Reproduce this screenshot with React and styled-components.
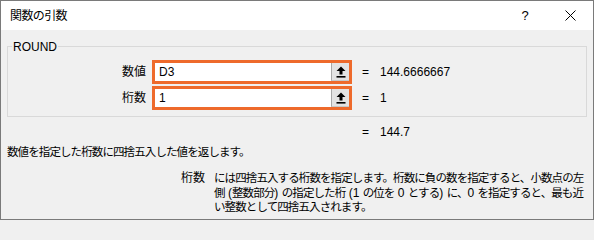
import React from "react";
import styled, { createGlobalStyle } from "styled-components";

const Global = createGlobalStyle`
  html, body { margin: 0; padding: 0; background: #f0f0f0; }
  * { box-sizing: border-box; }
`;

const FONT = `"Liberation Sans", "Noto Sans CJK JP", sans-serif`;

const Window = styled.div`
  width: 594px;
  height: 220px;
  border: 1px solid #7a7a7a;
  background: #f0f0f0;
  font-family: ${FONT};
  color: #000;
  display: flex;
  flex-direction: column;
  overflow: hidden;
`;

const TitleBar = styled.div`
  height: 29px;
  background: #fff;
  display: flex;
  align-items: center;
  padding-left: 9px;
  flex: none;
`;

const Title = styled.div`
  font-size: 12px;
  letter-spacing: -0.6px;
  line-height: 16px;
  flex: 1;
`;

const TitleButton = styled.div`
  width: ${(p) => p.$w}px;
  height: 29px;
  display: flex;
  align-items: center;
  justify-content: center;
  font-size: 13px;
`;

const Body = styled.div`
  padding: 9px 6px 0 6px;
  display: flex;
  flex-direction: column;
`;

const Group = styled.fieldset`
  margin: 0;
  padding: 7px 0 6px 0;
  border: 1px solid #d9d9d9;
  display: flex;
  flex-direction: column;
  gap: 2px;
`;

const Legend = styled.legend`
  font-size: 12px;
  line-height: 14px;
  padding: 0 1px;
  margin-left: 4px;
  position: relative;
  top: 1px;
`;

const ArgRow = styled.div`
  display: flex;
  align-items: center;
  height: 24px;
`;

const ArgLabel = styled.div`
  width: 138px;
  margin-right: 6px;
  text-align: right;
  font-size: 12px;
  line-height: 16px;
`;

const InputBox = styled.div`
  width: 200px;
  height: 24px;
  border: 3px solid #ee6a2b;
  background: #fff;
  display: flex;
  align-items: stretch;
`;

const InputText = styled.div`
  flex: 1;
  font-size: 12px;
  line-height: 18px;
  padding-left: 4px;
`;

const CollapseButton = styled.div`
  width: 18px;
  background: #e3e3e3;
  border-left: 1px solid #a8a8a8;
  border-bottom: 1px solid #c8c8c8;
  display: flex;
  align-items: center;
  justify-content: center;
`;

const Eq = styled.span`
  margin-left: 10px;
  font-size: 12px;
  line-height: 16px;
`;

const Value = styled.span`
  margin-left: 11px;
  font-size: 12px;
  line-height: 16px;
`;

const ResultRow = styled.div`
  display: flex;
  align-items: center;
  padding-left: 345px;
  margin-top: 7px;
  height: 16px;
`;

const Summary = styled.div`
  margin-top: 4px;
  font-size: 11.5px;
  letter-spacing: -0.9px;
  line-height: 16px;
  white-space: nowrap;
`;

const Help = styled.div`
  margin-top: 11px;
  display: grid;
  grid-template-columns: 24px auto;
  column-gap: 9px;
  padding-left: 174px;
  line-height: 14.5px;
`;

const HelpLabel = styled.div`
  font-size: 12px;
  white-space: nowrap;
`;

const HelpText = styled.div`
  font-size: 11.5px;
  letter-spacing: -0.9px;
  white-space: nowrap;
`;

const Lat = styled.span`
  font-size: 12px;
  letter-spacing: 0;
`;

const UpIcon = () => (
  <svg width="10" height="12" viewBox="0 0 10 12">
    <polygon points="5,0.5 9.5,5 6.5,5 6.5,8.5 3.5,8.5 3.5,5 0.5,5" fill="#000" />
    <rect x="0.5" y="10" width="9" height="1.6" fill="#000" />
  </svg>
);

const CloseIcon = () => (
  <svg width="11" height="11" viewBox="0 0 11 11">
    <path d="M0.5 0.5 L10.5 10.5 M10.5 0.5 L0.5 10.5" stroke="#000" strokeWidth="1" />
  </svg>
);

const Arg = ({ label, value, result }) => (
  <ArgRow>
    <ArgLabel>{label}</ArgLabel>
    <InputBox>
      <InputText>{value}</InputText>
      <CollapseButton>
        <UpIcon />
      </CollapseButton>
    </InputBox>
    <Eq>=</Eq>
    <Value>{result}</Value>
  </ArgRow>
);

export default function App() {
  return (
    <>
      <Global />
      <Window>
        <TitleBar>
          <Title>関数の引数</Title>
          <TitleButton $w={44}>?</TitleButton>
          <TitleButton $w={46}>
            <CloseIcon />
          </TitleButton>
        </TitleBar>
        <Body>
          <Group>
            <Legend>ROUND</Legend>
            <Arg label="数値" value="D3" result="144.6666667" />
            <Arg label="桁数" value="1" result="1" />
          </Group>
          <ResultRow>
            <Eq>=</Eq>
            <Value>144.7</Value>
          </ResultRow>
          <Summary>数値を指定した桁数に四捨五入した値を返します。</Summary>
          <Help>
            <HelpLabel>桁数</HelpLabel>
            <HelpText>
              には四捨五入する桁数を指定します。桁数に負の数を指定すると、小数点の左
              <br />
              側<Lat> (</Lat>整数部分<Lat>) </Lat>の指定した桁<Lat> (1 </Lat>の位を<Lat> 0 </Lat>とする<Lat>) </Lat>に、<Lat>0 </Lat>を指定すると、最も近
              <br />
              い整数として四捨五入されます。
            </HelpText>
          </Help>
        </Body>
      </Window>
    </>
  );
}
